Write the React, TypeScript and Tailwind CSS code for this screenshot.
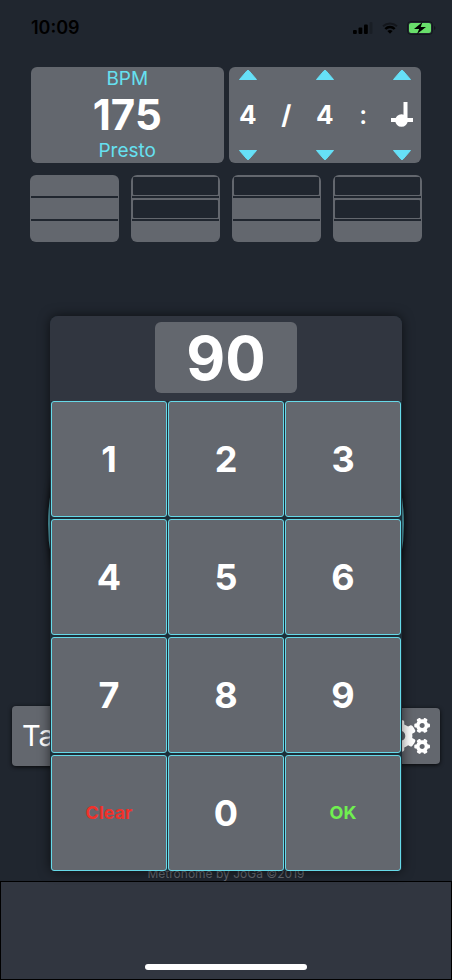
import { FaCogs } from "react-icons/fa";

function Arrow({ down = false }: { down?: boolean }) {
  return (
    <svg viewBox="0 0 18 10" className="h-[10px] w-[18px]" aria-hidden="true">
      <path
        d={down ? "M.5 .5h17L10 9.2q-1 .8-2 0z" : "M.5 9.5h17L10 .8q-1-.8-2 0z"}
        fill="#66e0f7"
        stroke="#66e0f7"
        strokeWidth="1"
        strokeLinejoin="round"
      />
    </svg>
  );
}

function QuarterNote() {
  return (
    <svg viewBox="0 0 24 26" className="h-[26px] w-6" fill="#fff" aria-hidden="true">
      <rect x="13.5" y="0" width="4" height="20" />
      <rect x="1" y="16" width="22" height="4" />
      <circle cx="11.5" cy="18.5" r="6.3" />
    </svg>
  );
}

function StatusBar() {
  return (
    <header className="flex h-[67px] items-start justify-between pt-4 pr-4 pl-[31px] text-black">
      <span className="text-lg leading-6 font-semibold">10:09</span>
      <div className="flex h-6 items-center gap-[9px]">
        <svg viewBox="0 0 20 12" className="h-3 w-5" aria-hidden="true">
          <rect x="0" y="8" width="3.8" height="4" rx="1" />
          <rect x="5.5" y="5.5" width="3.8" height="6.5" rx="1" />
          <rect x="11" y="2.5" width="3.8" height="9.5" rx="1" />
          <rect x="16.5" y="0" width="3" height="12" rx="1" opacity=".2" />
        </svg>
        <svg viewBox="0 0 16 12" className="h-3 w-4" fill="none" stroke="#000" aria-hidden="true">
          <path d="M1 4.3a10.2 10.2 0 0 1 14 0" strokeWidth="2" opacity=".4" />
          <path d="M3.3 7a6.5 6.5 0 0 1 9.4 0" strokeWidth="2.4" />
          <path d="M5.4 9.1a3.8 3.8 0 0 1 5.2 0L8 11.8z" fill="#000" stroke="none" />
        </svg>
        <svg viewBox="0 0 29 14" className="h-[14px] w-[29px]" aria-hidden="true">
          <rect x=".5" y=".5" width="25" height="13" rx="3.5" fill="none" stroke="#000" strokeOpacity=".4" />
          <rect x="2" y="2" width="22" height="10" rx="2" fill="#69df6b" />
          <path d="M27 5v4q1.5-.5 1.5-2t-1.5-2z" opacity=".4" />
          <path d="M15.5 1 7 8h5.2L10 13l9-7h-5.3z" />
        </svg>
      </div>
    </header>
  );
}

function Stepper({ name, children }: { name: string; children: React.ReactNode }) {
  return (
    <div className="flex flex-col items-center justify-between py-[3px]">
      <button type="button" aria-label={`Increase ${name}`}>
        <Arrow />
      </button>
      {children}
      <button type="button" aria-label={`Decrease ${name}`}>
        <Arrow down />
      </button>
    </div>
  );
}

function Beat({ level }: { level: number }) {
  return (
    <button
      type="button"
      aria-label={`Beat level ${level}`}
      className="flex h-[67px] flex-1 flex-col gap-[2px] overflow-hidden rounded-md bg-[#63676e]"
    >
      {[3, 2, 1].map((step) => (
        <span
          key={step}
          className={
            "relative block h-[21px] w-full " +
            (step > 1 ? "after:absolute after:inset-x-px after:top-full after:h-[2px] after:bg-[#20262f] " : "") +
            (step > level ? "px-[2px] pt-[2px] pb-px" : "")
          }
        >
          {step > level && <span className="block h-full rounded-[1px] bg-[#20262f]" />}
        </span>
      ))}
    </button>
  );
}

const keys = ["1", "2", "3", "4", "5", "6", "7", "8", "9", "Clear", "0", "OK"];

function keyStyle(key: string) {
  if (key === "Clear") return "text-lg text-[#f0322b]";
  if (key === "OK") return "text-lg text-[#70f050]";
  return "text-4xl text-white";
}

function Keypad() {
  return (
    <section
      role="dialog"
      aria-label="Enter tempo"
      className="absolute inset-x-[50px] top-[316px] rounded-t-lg rounded-b bg-[#1d2f39] shadow-[0_0_12px_rgba(0,0,0,0.6)]"
    >
      <div className="flex justify-center rounded-t-lg bg-[#313640] pt-[6px] pb-2">
        <output className="flex h-[71px] w-[142px] items-center justify-center rounded-md bg-[#63676e] text-6xl font-bold text-white">
          90
        </output>
      </div>
      <div className="grid grid-cols-3 gap-x-px gap-y-[2px] px-px">
        {keys.map((key) => (
          <button
            key={key}
            type="button"
            className={"h-[116px] rounded-[3px] border border-[#66d9e8] bg-[#63676e] font-bold " + keyStyle(key)}
          >
            {key}
          </button>
        ))}
      </div>
    </section>
  );
}

export default function App() {
  return (
    <div className="relative flex min-h-screen flex-col overflow-hidden bg-[#20262f] font-['Inter','Liberation_Sans',sans-serif]">
      <StatusBar />

      <section className="flex gap-[5px] px-[31px]">
        <button type="button" className="flex flex-1 flex-col items-center rounded-md bg-[#63676e]">
          <span className="text-[19px] leading-6 text-[#66e0f0]">BPM</span>
          <span className="text-[42px] leading-[48px] font-bold text-white">175</span>
          <span className="text-[19px] leading-6 text-[#66e0f0]">Presto</span>
        </button>
        <div className="grid flex-1 grid-cols-5 rounded-md bg-[#63676e] text-[26px] leading-8 font-bold text-white">
          <Stepper name="beats">
            <span>4</span>
          </Stepper>
          <span className="self-center text-center">/</span>
          <Stepper name="note value">
            <span>4</span>
          </Stepper>
          <span className="self-center text-center font-medium">:</span>
          <Stepper name="subdivision">
            <QuarterNote />
          </Stepper>
        </div>
      </section>

      <section className="mt-3 flex gap-3 px-[30px]">
        <Beat level={3} />
        <Beat level={1} />
        <Beat level={2} />
        <Beat level={1} />
      </section>

      <div className="mt-[104px] flex justify-center">
        <div className="size-[356px] rounded-full border-2 border-[#66d9e8]/70 shadow-[0_0_6px_rgba(0,0,0,0.8)]" />
      </div>

      <section className="mt-1 flex items-center justify-between px-3">
        <button
          type="button"
          className="h-[60px] rounded bg-[#63676e] px-[10px] text-[29px] text-white shadow-[0_1px_4px_rgba(0,0,0,0.8)]"
        >
          Tap
        </button>
        <button
          type="button"
          aria-label="Settings"
          className="h-14 rounded bg-[#63676e] px-[10px] text-white shadow-[0_1px_4px_rgba(0,0,0,0.8)]"
        >
          <FaCogs className="h-9 w-[45px]" />
        </button>
      </section>

      <p className="mt-auto text-center text-xs leading-[14px] text-[#63676e]">Metronome by JoGa ©2019</p>
      <footer className="flex h-[99px] items-end justify-center border border-black bg-[#313640] pb-[9px]">
        <div className="h-[6px] w-[162px] rounded-full bg-white" />
      </footer>

      <Keypad />
    </div>
  );
}
